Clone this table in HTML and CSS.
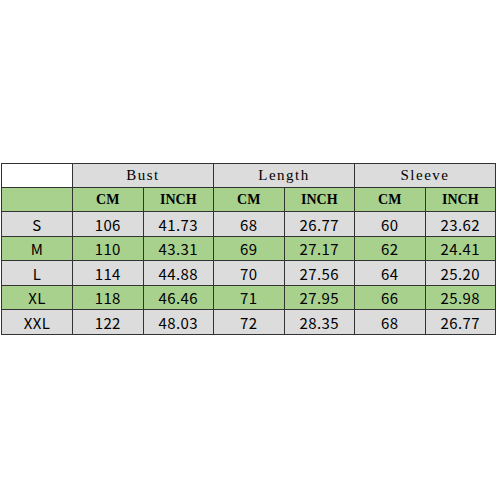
FILE: index.html
```html
<!DOCTYPE html>
<html>
<head>
<meta charset="utf-8">
<link rel="stylesheet" href="styles.css">
</head>
<body>
<div class="page">
  <table class="size-table">
    <colgroup>
      <col class="c-first"><col class="c"><col class="c"><col class="c"><col class="c"><col class="c"><col class="c">
    </colgroup>
    <tr class="r-head">
      <td class="blank"></td>
      <td class="group" colspan="2">Bust</td>
      <td class="group" colspan="2">Length</td>
      <td class="group" colspan="2">Sleeve</td>
    </tr>
    <tr class="r-sub green">
      <td></td>
      <td class="unit">CM</td><td class="unit">INCH</td>
      <td class="unit">CM</td><td class="unit">INCH</td>
      <td class="unit">CM</td><td class="unit">INCH</td>
    </tr>
    <tr class="r-a gray">
      <td class="size">S</td><td class="num">106</td><td class="num">41.73</td><td class="num">68</td><td class="num">26.77</td><td class="num">60</td><td class="num">23.62</td>
    </tr>
    <tr class="r-b green">
      <td class="size">M</td><td class="num">110</td><td class="num">43.31</td><td class="num">69</td><td class="num">27.17</td><td class="num">62</td><td class="num">24.41</td>
    </tr>
    <tr class="r-a gray">
      <td class="size">L</td><td class="num">114</td><td class="num">44.88</td><td class="num">70</td><td class="num">27.56</td><td class="num">64</td><td class="num">25.20</td>
    </tr>
    <tr class="r-b green">
      <td class="size">XL</td><td class="num">118</td><td class="num">46.46</td><td class="num">71</td><td class="num">27.95</td><td class="num">66</td><td class="num">25.98</td>
    </tr>
    <tr class="r-a gray">
      <td class="size">XXL</td><td class="num">122</td><td class="num">48.03</td><td class="num">72</td><td class="num">28.35</td><td class="num">68</td><td class="num">26.77</td>
    </tr>
  </table>
</div>
</body>
</html>
```
FILE: styles.css
```css
html, body {
  margin: 0;
  padding: 0;
  background: #ffffff;
}
.page {
  padding: 163px 0 0 1px;
}
.size-table {
  border-collapse: collapse;
  table-layout: fixed;
  width: 495px;
  color: #000000;
}
.c-first { width: 71px; }
.size-table td {
  border: 1px solid #333333;
  padding: 0;
  text-align: center;
  vertical-align: middle;
  line-height: 1;
  overflow: hidden;
  white-space: nowrap;
}
.r-head td, .r-sub td { height: 23px; }
.r-a td { height: 24px; }
.r-b td { height: 23px; }
.r-head .group {
  background: #dcdcdc;
  font-family: "Liberation Serif", serif;
  font-size: 15px;
  letter-spacing: 1.5px;
}
.r-head .blank { background: #ffffff; }
.green td { background: #a9d18e; }
.gray td { background: #dcdcdc; }
.unit {
  font-family: "Liberation Serif", serif;
  font-weight: bold;
  font-size: 14px;
}
.num, .size {
  font-family: "Noto Sans CJK SC", sans-serif;
  font-weight: 400;
  font-size: 15px;
  letter-spacing: 0.4px;
}
```
